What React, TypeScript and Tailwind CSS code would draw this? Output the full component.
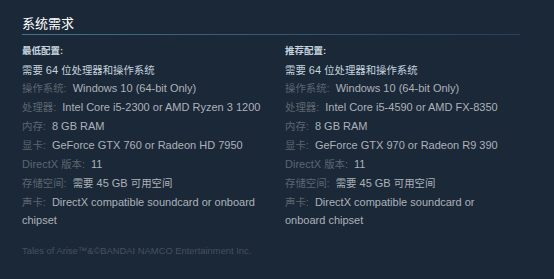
import React from "react";

type Row = { label: string; value: string };

const minRows: Row[] = [
  { label: "操作系统:", value: "Windows 10 (64-bit Only)" },
  { label: "处理器:", value: "Intel Core i5-2300 or AMD Ryzen 3 1200" },
  { label: "内存:", value: "8 GB RAM" },
  { label: "显卡:", value: "GeForce GTX 760 or Radeon HD 7950" },
  { label: "DirectX 版本:", value: "11" },
  { label: "存储空间:", value: "需要 45 GB 可用空间" },
  { label: "声卡:", value: "DirectX compatible soundcard or onboard chipset" },
];

const recRows: Row[] = [
  { label: "操作系统:", value: "Windows 10 (64-bit Only)" },
  { label: "处理器:", value: "Intel Core i5-4590 or AMD FX-8350" },
  { label: "内存:", value: "8 GB RAM" },
  { label: "显卡:", value: "GeForce GTX 970 or Radeon R9 390" },
  { label: "DirectX 版本:", value: "11" },
  { label: "存储空间:", value: "需要 45 GB 可用空间" },
  { label: "声卡:", value: "DirectX compatible soundcard or onboard chipset" },
];

function Mixed({ text }: { text: string }) {
  const parts = text.split(/([\u4e00-\u9fff]+)/).filter((p) => p.length > 0);
  return (
    <>
      {parts.map((p, i) =>
        /[\u4e00-\u9fff]/.test(p) ? (
          <span key={i} className="text-[10.4px] leading-none">
            {p}
          </span>
        ) : (
          <React.Fragment key={i}>{p}</React.Fragment>
        )
      )}
    </>
  );
}

function Column({ title, rows }: { title: string; rows: Row[] }) {
  return (
    <div className="pr-[10px]">
      <div className="text-[9.5px] leading-[14px] text-[#c6d4df] font-bold mt-[9px] mb-[3px]">{title}</div>
      <ul className="text-[11px] leading-[18px]">
        <li className="text-[#c6d4df] h-[18px]">
          <Mixed text="需要 64 位处理器和操作系统" />
        </li>
        {rows.map((r, i) => (
          <li key={i} className={`text-[#acb2b8] ${i === 0 ? "" : "mt-[1px]"}`}>
            <span className="text-[#5b6670]">
              <Mixed text={r.label} />
            </span>{" "}
            <span className="pl-[3px]">
              <Mixed text={r.value} />
            </span>
          </li>
        ))}
      </ul>
    </div>
  );
}

export default function App() {
  return (
    <div
      className="w-[554px] h-[279px] bg-[#1b2838] overflow-hidden"
      style={{ fontFamily: '"Liberation Sans", Arial, "Noto Sans CJK SC", sans-serif' }}
    >
      <div className="pl-[22px] pr-[34px] pt-[14px]">
        <div className="text-[13px] leading-[20px] text-white">系统需求</div>
        <div className="h-px bg-gradient-to-r from-[#3f7396] to-[#26415a]" />
        <div className="grid grid-cols-[263px_1fr]">
          <Column title="最低配置:" rows={minRows} />
          <Column title="推荐配置:" rows={recRows} />
        </div>
        <div className="mt-[15px] text-[9.4px] leading-[14px] text-[#45515e]">
          Tales of Arise™&amp;©BANDAI NAMCO Entertainment Inc.
        </div>
      </div>
    </div>
  );
}
